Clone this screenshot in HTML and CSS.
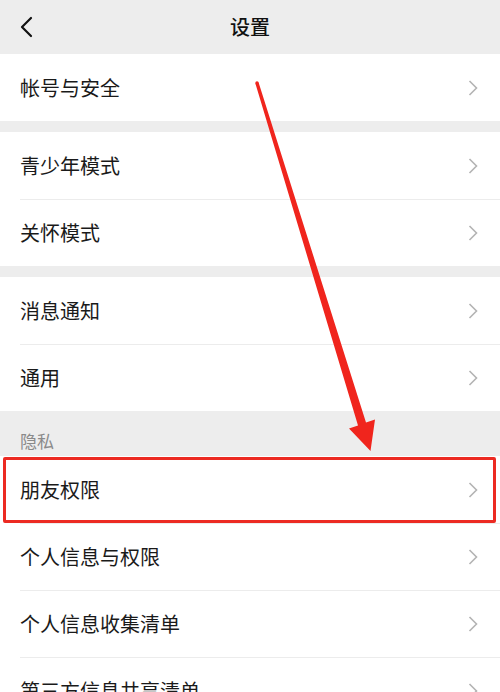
FILE: index.html
```html
<!DOCTYPE html>
<html lang="zh-CN">
<head>
<meta charset="utf-8">
<title>设置</title>
<link rel="stylesheet" href="styles.css">
</head>
<body>
<div class="page">
  <header class="topbar">
    <svg class="back" width="14" height="22" viewBox="0 0 14 22"><path d="M12 2 L3 11 L12 20" fill="none" stroke="#111" stroke-width="2.2" stroke-linecap="round" stroke-linejoin="round"/></svg>
    <h1 class="title">设置</h1>
  </header>

  <section class="group">
    <div class="row"><span class="label">帐号与安全</span><svg class="chev" viewBox="0 0 10 16"><path d="M1.5 1 L8.5 8 L1.5 15" fill="none" stroke="#b3b3b3" stroke-width="1.6"/></svg></div>
  </section>

  <section class="group">
    <div class="row"><span class="label">青少年模式</span><svg class="chev" viewBox="0 0 10 16"><path d="M1.5 1 L8.5 8 L1.5 15" fill="none" stroke="#b3b3b3" stroke-width="1.6"/></svg></div>
    <div class="row"><span class="label">关怀模式</span><svg class="chev" viewBox="0 0 10 16"><path d="M1.5 1 L8.5 8 L1.5 15" fill="none" stroke="#b3b3b3" stroke-width="1.6"/></svg></div>
  </section>

  <section class="group flush">
    <div class="row"><span class="label">消息通知</span><svg class="chev" viewBox="0 0 10 16"><path d="M1.5 1 L8.5 8 L1.5 15" fill="none" stroke="#b3b3b3" stroke-width="1.6"/></svg></div>
    <div class="row"><span class="label">通用</span><svg class="chev" viewBox="0 0 10 16"><path d="M1.5 1 L8.5 8 L1.5 15" fill="none" stroke="#b3b3b3" stroke-width="1.6"/></svg></div>
  </section>

  <div class="section-label">隐私</div>
  <section class="group flush">
    <div class="row highlighted"><span class="label">朋友权限</span><svg class="chev" viewBox="0 0 10 16"><path d="M1.5 1 L8.5 8 L1.5 15" fill="none" stroke="#b3b3b3" stroke-width="1.6"/></svg></div>
    <div class="row"><span class="label">个人信息与权限</span><svg class="chev" viewBox="0 0 10 16"><path d="M1.5 1 L8.5 8 L1.5 15" fill="none" stroke="#b3b3b3" stroke-width="1.6"/></svg></div>
    <div class="row"><span class="label">个人信息收集清单</span><svg class="chev" viewBox="0 0 10 16"><path d="M1.5 1 L8.5 8 L1.5 15" fill="none" stroke="#b3b3b3" stroke-width="1.6"/></svg></div>
    <div class="row"><span class="label">第三方信息共享清单</span><svg class="chev" viewBox="0 0 10 16"><path d="M1.5 1 L8.5 8 L1.5 15" fill="none" stroke="#b3b3b3" stroke-width="1.6"/></svg></div>
  </section>

  <svg class="arrow" width="500" height="692" viewBox="0 0 500 692">
    <polygon points="255.4,83.6 258.6,82.4 366,422.6 375,419.6 370.5,451 349,428.6 358,425.4" fill="#f0251d"/>
    <circle cx="257" cy="83" r="1.7" fill="#f0251d"/>
  </svg>
</div>
</body>
</html>
```

FILE: styles.css
```css
html, body {
  margin: 0;
  padding: 0;
  background: #ededed;
}

.page {
  position: relative;
  width: 500px;
  height: 692px;
  overflow: hidden;
  font-family: "Noto Sans CJK SC", "Noto Sans", sans-serif;
  color: #191919;
}

.topbar {
  height: 54px;
  background: #ededed;
  display: flex;
  align-items: center;
  justify-content: center;
  position: relative;
}

.back {
  position: absolute;
  left: 19px;
  top: 16px;
}

.title {
  margin: 0;
  font-size: 20px;
  font-weight: 500;
  color: #111;
  line-height: 1;
}

.group {
  background: #fff;
  margin-bottom: 11px;
}

.group.flush {
  margin-bottom: 0;
}

.row {
  position: relative;
  height: 67px;
  display: flex;
  align-items: center;
  justify-content: space-between;
  padding: 0 22px 0 20px;
}

.row + .row::before {
  content: "";
  position: absolute;
  left: 20px;
  right: 0;
  top: 0;
  height: 1px;
  background: #ececec;
}

.label {
  font-size: 20px;
  line-height: 1;
  color: #1a1a1a;
}

.chev {
  width: 10px;
  height: 16px;
}

.section-label {
  height: 45px;
  box-sizing: border-box;
  padding: 20px 0 0 20px;
  font-size: 17px;
  line-height: 20px;
  color: #8a8a8a;
}

.highlighted::after {
  content: "";
  position: absolute;
  left: 3px;
  right: 4px;
  top: 1px;
  bottom: 0;
  border: 3px solid #ec2a22;
  border-radius: 2px;
}

.arrow {
  position: absolute;
  left: 0;
  top: 0;
  pointer-events: none;
}
```
